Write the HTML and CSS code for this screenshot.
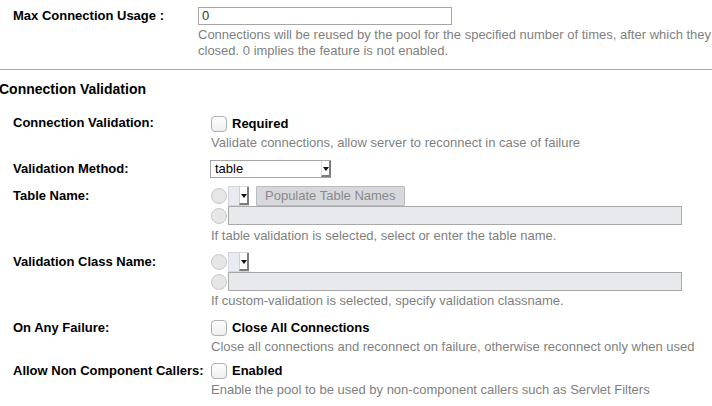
FILE: index.html
```html
<!DOCTYPE html>
<html>
<head>
<meta charset="utf-8">
<link rel="stylesheet" href="styles.css">
</head>
<body>
<div class="page">
  <div class="row1">
    <div class="lbl">Max Connection Usage :</div>
    <div class="val">
      <div class="txt">0</div>
      <div class="help help1">Connections will be reused by the pool for the specified number of times, after which they<br>closed. 0 implies the feature is not enabled.</div>
    </div>
  </div>
  <div class="rule"></div>
  <h2 class="heading">Connection Validation</h2>

  <div class="row r-cv">
    <div class="lbl">Connection Validation:</div>
    <div class="val">
      <div class="chkline"><span class="chk"></span><span class="chklbl">Required</span></div>
      <div class="help">Validate connections, allow server to reconnect in case of failure</div>
    </div>
  </div>

  <div class="row r-vm">
    <div class="lbl">Validation Method:</div>
    <div class="val">
      <div class="sel"><span class="seltxt">table</span><span class="arrow"><span class="tri"></span></span></div>
    </div>
  </div>

  <div class="row r-tn">
    <div class="lbl">Table Name:</div>
    <div class="val">
      <div class="optline l1"><span class="radio"></span><span class="minisel"><span class="arrow"><span class="tri"></span></span></span><span class="btn">Populate Table Names</span></div>
      <div class="optline l2"><span class="radio"></span><span class="dis"></span></div>
      <div class="help">If table validation is selected, select or enter the table name.</div>
    </div>
  </div>

  <div class="row r-vc">
    <div class="lbl">Validation Class Name:</div>
    <div class="val">
      <div class="optline l1"><span class="radio"></span><span class="minisel"><span class="arrow"><span class="tri"></span></span></span></div>
      <div class="optline l2"><span class="radio"></span><span class="dis"></span></div>
      <div class="help">If custom-validation is selected, specify validation classname.</div>
    </div>
  </div>

  <div class="row r-of">
    <div class="lbl">On Any Failure:</div>
    <div class="val">
      <div class="chkline"><span class="chk"></span><span class="chklbl">Close All Connections</span></div>
      <div class="help">Close all connections and reconnect on failure, otherwise reconnect only when used</div>
    </div>
  </div>

  <div class="row r-nc">
    <div class="lbl">Allow Non Component Callers:</div>
    <div class="val">
      <div class="chkline"><span class="chk"></span><span class="chklbl">Enabled</span></div>
      <div class="help">Enable the pool to be used by non-component callers such as Servlet Filters</div>
    </div>
  </div>
</div>
</body>
</html>
```
FILE: styles.css
```css
html, body {
  margin: 0;
  padding: 0;
  background: #fff;
}
body {
  font-family: "Liberation Sans", Arial, sans-serif;
  font-size: 13px;
  color: #000;
  overflow: hidden;
  width: 712px;
  height: 406px;
}
.page {
  width: 712px;
  overflow: hidden;
}
.lbl {
  font-weight: bold;
  line-height: 16px;
  white-space: nowrap;
  color: #000;
}
.help {
  color: #7f7f7f;
  line-height: 16px;
  white-space: nowrap;
}
.row1 {
  display: grid;
  grid-template-columns: 185px 1fr;
  padding: 7px 0 0 13px;
}
.row1 .lbl {
  padding-top: 1px;
}
.txt {
  box-sizing: border-box;
  width: 254px;
  height: 18px;
  border: 1px solid #a6a6a6;
  line-height: 16px;
  padding-left: 3px;
  color: #333;
}
.help1 {
  margin-top: 2px;
}
.rule {
  height: 0;
  border-top: 1px solid #a8a8a8;
  margin-top: 10px;
}
.heading {
  font-size: 14px;
  font-weight: bold;
  line-height: 18px;
  margin: 10px 0 0 -1px;
}
.row {
  display: grid;
  grid-template-columns: 197px 1fr;
  padding-left: 13px;
}
.r-cv { margin-top: 17px; }
.r-vm { margin-top: 9px; }
.r-tn { margin-top: 8px; }
.r-vc { margin-top: 8px; }
.r-of { margin-top: 10px; }
.r-nc { margin-top: 7px; }
.r-vm .lbl { padding-top: 1px; }
.r-tn .lbl, .r-vc .lbl { padding-top: 2px; }
.r-of .lbl, .r-nc .lbl { padding-top: 1px; }

.chkline {
  display: flex;
  align-items: center;
  height: 18px;
  padding-left: 1px;
}
.chk {
  box-sizing: border-box;
  width: 16px;
  height: 16px;
  border: 1px solid #b0b0b0;
  border-radius: 4px;
  background: linear-gradient(#fdfdfd, #efefef);
}
.chklbl {
  font-weight: bold;
  margin-left: 5px;
  line-height: 16px;
}
.chkline + .help {
  margin-top: 2px;
  padding-left: 1px;
}
.sel {
  box-sizing: border-box;
  width: 121px;
  height: 18px;
  border: 1px solid #a6a6a6;
  border-right: none;
  display: flex;
  align-items: stretch;
  background: #fff;
}
.seltxt {
  flex: 1;
  line-height: 16px;
  padding-left: 4px;
  color: #000;
}
.arrow {
  box-sizing: border-box;
  width: 10px;
  background: #fff;
  border-left: 1px solid #e0e0e0;
  border-right: 2px solid #7c7c7c;
  border-bottom: 2px solid #7c7c7c;
  display: flex;
  align-items: center;
  justify-content: center;
}
.tri {
  width: 0;
  height: 0;
  border-left: 3px solid transparent;
  border-right: 3px solid transparent;
  border-top: 4px solid #111;
  margin-top: 1px;
}
.optline {
  display: flex;
  align-items: center;
  padding-left: 1px;
  height: 20px;
}
.radio {
  box-sizing: border-box;
  width: 16px;
  height: 16px;
  border-radius: 50%;
  border: 1px solid #c8c8c8;
  background: #e6e6e6;
}
.minisel {
  box-sizing: border-box;
  width: 21px;
  height: 20px;
  margin-left: 1px;
  background: #e8ecf2;
  border: 1px solid #d4d7dc;
  border-right: none;
  display: flex;
  justify-content: flex-end;
  align-self: flex-start;
}
.minisel .arrow {
  width: 10px;
  border-left: 1px solid #d0d0d0;
}
.btn {
  box-sizing: border-box;
  margin-left: 7px;
  height: 20px;
  padding: 0 8px;
  background: #d6d8dc;
  border: 1px solid #b9bbbf;
  border-radius: 1px;
  color: #8a8a8a;
  line-height: 18px;
  font-size: 13px;
  align-self: flex-start;
}
.dis {
  box-sizing: border-box;
  margin-left: 1px;
  width: 454px;
  height: 19px;
  background: #e8e9ec;
  border: 1px solid #a9a9a9;
  align-self: flex-start;
}
.optline.l2 + .help {
  margin-top: 2px;
  padding-left: 1px;
}
.r-vc .optline.l2 + .help { margin-top: 1px; }
```
